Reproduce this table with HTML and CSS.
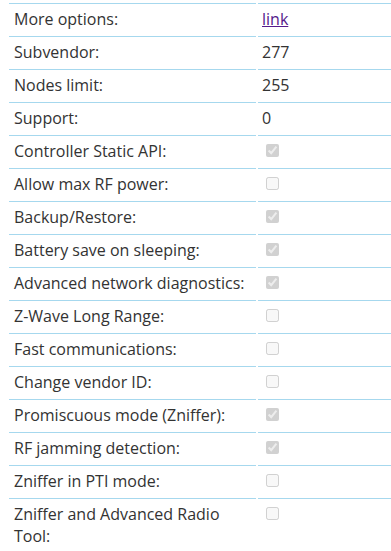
FILE: index.html
```html
<!DOCTYPE html>
<html>
<head>
<meta charset="utf-8">
<link rel="stylesheet" href="styles.css">
</head>
<body>
<table class="opts">
<tbody>
<tr><td class="k">More options:</td><td class="v"><a href="#" class="lnk">link</a></td></tr>
<tr><td class="k">Subvendor:</td><td class="v">277</td></tr>
<tr><td class="k">Nodes limit:</td><td class="v">255</td></tr>
<tr><td class="k">Support:</td><td class="v">0</td></tr>
<tr><td class="k">Controller Static API:</td><td class="v"><input type="checkbox" checked disabled></td></tr>
<tr><td class="k">Allow max RF power:</td><td class="v"><input type="checkbox" disabled></td></tr>
<tr><td class="k">Backup/Restore:</td><td class="v"><input type="checkbox" checked disabled></td></tr>
<tr><td class="k">Battery save on sleeping:</td><td class="v"><input type="checkbox" checked disabled></td></tr>
<tr><td class="k">Advanced network diagnostics:</td><td class="v"><input type="checkbox" checked disabled></td></tr>
<tr><td class="k">Z-Wave Long Range:</td><td class="v"><input type="checkbox" disabled></td></tr>
<tr><td class="k">Fast communications:</td><td class="v"><input type="checkbox" disabled></td></tr>
<tr><td class="k">Change vendor ID:</td><td class="v"><input type="checkbox" disabled></td></tr>
<tr><td class="k">Promiscuous mode (Zniffer):</td><td class="v"><input type="checkbox" checked disabled></td></tr>
<tr><td class="k">RF jamming detection:</td><td class="v"><input type="checkbox" checked disabled></td></tr>
<tr><td class="k">Zniffer in PTI mode:</td><td class="v"><input type="checkbox" disabled></td></tr>
<tr><td class="k">Zniffer and Advanced Radio Tool:</td><td class="v"><input type="checkbox" disabled></td></tr>
</tbody>
</table>
</body>
</html>
```

FILE: styles.css
```css
html, body {
  margin: 0;
  padding: 0;
  background: #fff;
  overflow: hidden;
}
body {
  padding-top: 3px;
  font-family: "Open Sans", "DejaVu Sans", sans-serif;
  font-size: 16px;
  color: #333;
}
.opts {
  margin-left: 7px;
  width: 392px;
  border-collapse: separate;
  border-spacing: 2px 0;
  table-layout: fixed;
}
.opts td {
  border-top: 1px solid #a6d8ee;
  padding: 4px 4px 6px 5px;
  line-height: 22px;
  vertical-align: top;
}
.opts td.k {
  width: 238px;
  padding-left: 5px;
}
.opts td.v {
  padding-left: 4px;
}
.opts input[type="checkbox"] {
  margin: 4px 3px 3px 4px;
  width: 13px;
  height: 13px;
  vertical-align: top;
}
.lnk {
  color: #551a8b;
}
```
